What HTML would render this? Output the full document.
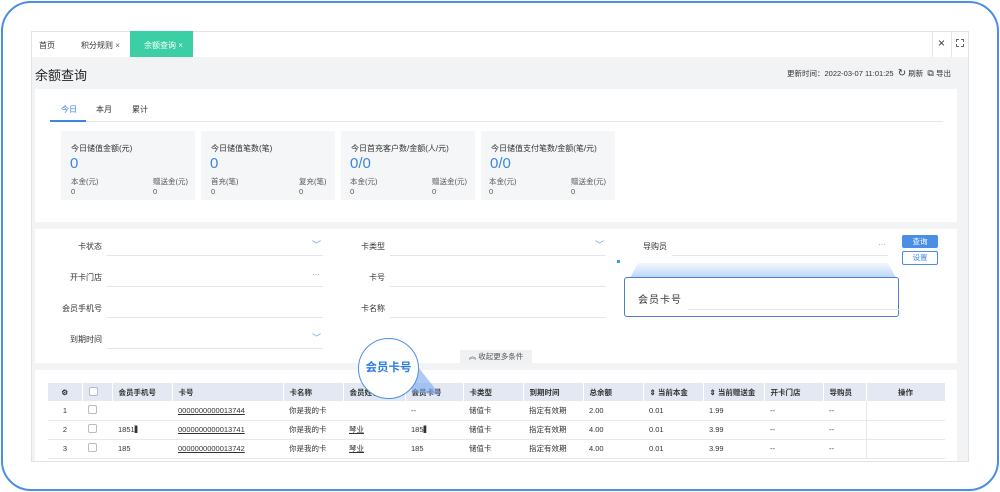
<!DOCTYPE html><html><head><meta charset="utf-8"><style>
*{box-sizing:border-box;margin:0;padding:0}
body{width:1000px;height:492px;background:#fff;font-family:"Liberation Sans","Noto Sans CJK SC",sans-serif;font-size:8px;color:#333;position:relative;overflow:hidden}
.a{position:absolute}
.frame{left:1px;top:1px;width:998px;height:490px;border:2px solid #4a8ee6;border-radius:30px}
.app{left:31px;top:31px;width:938px;height:431px;background:#f2f3f5;border:1px solid #e2e2e2}
.lbl{font-size:8px;color:#333;white-space:nowrap}
.line{height:1px;background:#e6e6e6}
.card{background:#f5f6f8;width:134px;height:69px}
.card .t{position:absolute;left:10px;top:12px;font-size:8px;white-space:nowrap}
.card .v{position:absolute;left:9px;top:24px;font-size:15px;color:#3a86e0}
.card .s{position:absolute;top:45px;font-size:7.5px;color:#555}
.card .n{position:absolute;top:56px;font-size:7.5px;color:#555}
th,td{font-size:7.5px;text-align:left;font-weight:normal;white-space:nowrap}
table{border-collapse:collapse;position:absolute;left:48px;top:383px;width:897px;table-layout:fixed}
th{background:#e3e8f2;height:18px;padding-left:6px;font-weight:bold;border-right:1px solid #fff}
td{height:19px;padding-left:6px;border-bottom:1px solid #e8e8e8}
.cb{display:inline-block;width:9px;height:9px;border:1px solid #bbb;border-radius:2px;background:#fff}
u{text-decoration:underline}
</style></head><body>
<div class="a frame"></div>
<div class="a app"></div>
<!-- tab bar -->
<div class="a" style="left:32px;top:32px;width:936px;height:25px;background:#fff"></div>
<div class="a lbl" style="left:39px;top:40px">首页</div>
<div class="a lbl" style="left:81px;top:40px">积分规则 <span style="color:#666">×</span></div>
<div class="a" style="left:130px;top:31px;width:63px;height:26px;background:#3ccfa6"></div>
<div class="a lbl" style="left:144px;top:40px;color:#fff">余额查询 ×</div>
<div class="a" style="left:932px;top:32px;width:1px;height:25px;background:#e6e6e6"></div>
<div class="a" style="left:951px;top:32px;width:1px;height:25px;background:#e6e6e6"></div>
<div class="a" style="left:938px;top:36px;font-size:12px">×</div>
<div class="a" style="left:956px;top:39px;width:8px;height:8px;border:1px dashed #666"></div>
<!-- title -->
<div class="a" style="left:35px;top:65px;font-size:13px;color:#222">余额查询</div>
<div class="a lbl" style="left:787px;top:68px;font-size:7.5px">更新时间：2022-03-07 11:01:25 &nbsp;<span style="font-size:10px">↻</span> 刷新 &nbsp;<span style="font-size:9px">⧉</span> 导出</div>
<!-- stats panel -->
<div class="a" style="left:35px;top:89px;width:922px;height:133px;background:#fff"></div>
<div class="a lbl" style="left:61px;top:104px;color:#3a86e0">今日</div>
<div class="a lbl" style="left:96px;top:104px">本月</div>
<div class="a lbl" style="left:132px;top:104px">累计</div>
<div class="a line" style="left:50px;top:121px;width:893px"></div>
<div class="a" style="left:50px;top:120px;width:36px;height:2px;background:#3a86e0"></div>
<div class="a card" style="left:61px;top:131px"><div class="t">今日储值金额(元)</div><div class="v">0</div><div class="s" style="left:10px">本金(元)</div><div class="s" style="left:92px">赠送金(元)</div><div class="n" style="left:10px">0</div><div class="n" style="left:92px">0</div></div>
<div class="a card" style="left:201px;top:131px"><div class="t">今日储值笔数(笔)</div><div class="v">0</div><div class="s" style="left:10px">首充(笔)</div><div class="s" style="left:98px">复充(笔)</div><div class="n" style="left:10px">0</div><div class="n" style="left:98px">0</div></div>
<div class="a card" style="left:341px;top:131px"><div class="t">今日首充客户数/金额(人/元)</div><div class="v">0/0</div><div class="s" style="left:9px">本金(元)</div><div class="s" style="left:91px">赠送金(元)</div><div class="n" style="left:9px">0</div><div class="n" style="left:91px">0</div></div>
<div class="a card" style="left:481px;top:131px"><div class="t">今日储值支付笔数/金额(笔/元)</div><div class="v">0/0</div><div class="s" style="left:8px">本金(元)</div><div class="s" style="left:90px">赠送金(元)</div><div class="n" style="left:8px">0</div><div class="n" style="left:90px">0</div></div>
<!-- form panel -->
<div class="a" style="left:35px;top:229px;width:922px;height:134px;background:#fff"></div>
<div class="a lbl" style="left:78px;top:241px">卡状态</div>
<div class="a lbl" style="left:70px;top:272px">开卡门店</div>
<div class="a lbl" style="left:62px;top:303px">会员手机号</div>
<div class="a lbl" style="left:70px;top:334px">到期时间</div>
<div class="a line" style="left:107px;top:255px;width:216px"></div>
<div class="a line" style="left:107px;top:286px;width:216px"></div>
<div class="a line" style="left:107px;top:317px;width:216px"></div>
<div class="a line" style="left:107px;top:348px;width:216px"></div>
<div class="a" style="left:312px;top:238px;color:#6aa0e0;font-size:9px">﹀</div>
<div class="a" style="left:312px;top:331px;color:#6aa0e0;font-size:9px">﹀</div>
<div class="a" style="left:312px;top:270px;color:#6aa0e0">···</div>
<div class="a lbl" style="left:361px;top:241px">卡类型</div>
<div class="a lbl" style="left:369px;top:272px">卡号</div>
<div class="a lbl" style="left:361px;top:303px">卡名称</div>
<div class="a line" style="left:390px;top:255px;width:216px"></div>
<div class="a line" style="left:390px;top:286px;width:216px"></div>
<div class="a line" style="left:390px;top:317px;width:216px"></div>
<div class="a" style="left:595px;top:238px;color:#6aa0e0;font-size:9px">﹀</div>
<div class="a lbl" style="left:643px;top:241px">导购员</div>
<div class="a line" style="left:672px;top:255px;width:216px"></div>
<div class="a" style="left:878px;top:240px;color:#999">···</div>
<div class="a" style="left:617px;top:260px;width:3px;height:3px;background:#2aa0e8"></div>
<div class="a" style="left:902px;top:235px;width:36px;height:13px;background:#4a8ee6;border-radius:2px;color:#fff;font-size:7.5px;text-align:center;line-height:13px">查询</div>
<div class="a" style="left:902px;top:251px;width:36px;height:14px;border:1px solid #4a8ee6;border-radius:2px;color:#4a8ee6;font-size:7.5px;text-align:center;line-height:12px">设置</div>
<div class="a" style="left:460px;top:350px;width:72px;height:13px;background:#f0f1f3;font-size:7.5px;color:#555;text-align:center;line-height:13px">︽ 收起更多条件</div>
<!-- popup -->
<div class="a" style="left:630px;top:263px;width:266px;height:15px;background:linear-gradient(#f4f8ff,#b9d4f7);clip-path:polygon(3% 0,97% 0,100% 100%,0 100%)"></div>
<div class="a" style="left:624px;top:277px;width:275px;height:40px;border:1px solid #4a7fd0;border-radius:3px;background:#fff"></div>
<div class="a" style="left:638px;top:291px;font-size:10px;letter-spacing:1px">会员卡号</div>
<div class="a line" style="left:688px;top:309px;width:211px"></div>
<!-- table panel -->
<div class="a" style="left:35px;top:370px;width:922px;height:91px;background:#fff"></div>
<table>
<colgroup><col style="width:34px"><col style="width:30px"><col style="width:60px"><col style="width:111px"><col style="width:60px"><col style="width:62px"><col style="width:58px"><col style="width:60px"><col style="width:60px"><col style="width:60px"><col style="width:60px"><col style="width:61px"><col style="width:59px"><col style="width:43px"><col style="width:79px"></colgroup>
<tr><th style="text-align:center;padding:0">⚙</th><th><span class="cb"></span></th><th>会员手机号</th><th>卡号</th><th>卡名称</th><th>会员姓名</th><th>会员卡号</th><th>卡类型</th><th>到期时间</th><th>总余额</th><th>⇕ 当前本金</th><th>⇕ 当前赠送金</th><th>开卡门店</th><th>导购员</th><th style="text-align:center;padding:0">操作</th></tr>
<tr><td style="text-align:center;padding:0">1</td><td><span class="cb"></span></td><td></td><td><u>0000000000013744</u></td><td>你是我的卡</td><td></td><td>--</td><td>储值卡</td><td>指定有效期</td><td>2.00</td><td>0.01</td><td>1.99</td><td>--</td><td>--</td><td style="border-left:1px solid #e8e8e8"></td></tr>
<tr><td style="text-align:center;padding:0">2</td><td><span class="cb"></span></td><td>1851▍</td><td><u>0000000000013741</u></td><td>你是我的卡</td><td><u>琴业</u></td><td>185▍</td><td>储值卡</td><td>指定有效期</td><td>4.00</td><td>0.01</td><td>3.99</td><td>--</td><td>--</td><td style="border-left:1px solid #e8e8e8"></td></tr>
<tr><td style="text-align:center;padding:0">3</td><td><span class="cb"></span></td><td>185</td><td><u>0000000000013742</u></td><td>你是我的卡</td><td><u>琴业</u></td><td>185</td><td>储值卡</td><td>指定有效期</td><td>4.00</td><td>0.01</td><td>3.99</td><td>--</td><td>--</td><td style="border-left:1px solid #e8e8e8"></td></tr>
</table>
<!-- callout -->
<svg class="a" style="left:350px;top:330px" width="110" height="80"><polygon points="55,20 90,65 62,62" fill="#7aa8ee" opacity="0.6"/></svg>
<div class="a" style="left:358px;top:338px;width:61px;height:61px;border:1px solid #4a8ee6;border-radius:50%;background:#fff;color:#2f7de0;font-weight:bold;font-size:11.5px;text-align:center;line-height:59px">会员卡号</div>
</body></html>
